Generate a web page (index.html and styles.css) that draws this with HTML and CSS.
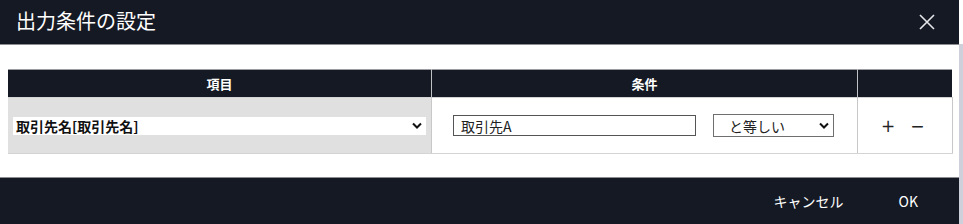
FILE: index.html
```html
<!DOCTYPE html>
<html lang="ja">
<head>
    <meta charset="UTF-8">
    <title>出力条件の設定</title>
    <link rel="stylesheet" href="styles.css">
</head>
<body>
    <div class="screen">
        <div class="modal">
            <div class="modal-head">
                <h1 class="modal-title">出力条件の設定</h1>
                <button class="close-btn" aria-label="閉じる">
                    <svg width="16" height="16" viewBox="0 0 16 16">
                        <path d="M1 1L15 15M15 1L1 15" stroke="#e4e6ea" stroke-width="1.6" fill="none"/>
                    </svg>
                </button>
            </div>

            <div class="modal-body">
                <table class="cond-table">
                    <thead>
                        <tr>
                            <th class="col-item">項目</th>
                            <th class="col-cond">条件</th>
                            <th class="col-ops"></th>
                        </tr>
                    </thead>
                    <tbody>
                        <tr>
                            <td class="cell-item">
                                <div class="item-select">
                                    <span>取引先名[取引先名]</span>
                                    <svg class="chev" width="10" height="7" viewBox="0 0 10 7"><path d="M1 1.5L5 5.5L9 1.5" stroke="#111" stroke-width="2" fill="none"/></svg>
                                </div>
                            </td>
                            <td class="cell-cond">
                                <div class="cond-wrap">
                                    <input class="cond-input" type="text" value="取引先A">
                                    <div class="op-select">
                                        <span>と等しい</span>
                                        <svg class="chev" width="10" height="7" viewBox="0 0 10 7"><path d="M1 1.5L5 5.5L9 1.5" stroke="#111" stroke-width="2" fill="none"/></svg>
                                    </div>
                                </div>
                            </td>
                            <td class="cell-ops">
                                <button class="op-btn">+</button>
                                <button class="op-btn">−</button>
                            </td>
                        </tr>
                    </tbody>
                </table>
            </div>

            <div class="modal-foot">
                <button class="foot-btn">キャンセル</button>
                <button class="foot-btn ok">OK</button>
            </div>
        </div>
        <div class="scroll-track"></div>
    </div>
</body>
</html>
```

FILE: styles.css
```css
body {
    margin: 0;
    background: #fff;
    font-family: "Noto Sans CJK JP", "Noto Sans", sans-serif;
}

.screen {
    display: flex;
    width: 963px;
    height: 224px;
    overflow: hidden;
}

.modal {
    width: 959px;
    display: flex;
    flex-direction: column;
}

.scroll-track {
    width: 4px;
    margin-top: 44px;
    background: #cdd0da;
}

/* header */
.modal-head {
    height: 44px;
    background: #151923;
    border-bottom: 1px solid #8b8d93;
    display: flex;
    align-items: center;
    justify-content: space-between;
    padding: 0 24px 0 16px;
}

.modal-title {
    margin: 0;
    color: #fff;
    font-size: 20px;
    font-weight: normal;
    line-height: 1;
    padding-bottom: 2px;
}

.close-btn {
    background: transparent;
    border: 0;
    padding: 0;
    display: flex;
    cursor: pointer;
}

/* body */
.modal-body {
    flex: 1;
    padding: 24px 9px 0 8px;
}

.cond-table {
    width: 942px;
    border-collapse: collapse;
    table-layout: fixed;
    font-size: 13px;
}

.cond-table th {
    height: 27px;
    padding: 0;
    background: #151923;
    color: #fff;
    font-weight: bold;
    border-top: 1px solid #9a9ca2;
    border-right: 1px solid #bfc1c5;
    line-height: 1;
}

.cond-table th:last-child {
    border-right: 0;
}

.col-item { width: 423px; }
.col-cond { width: 425px; }
.col-ops  { width: 94px; }

.cond-table td {
    height: 55px;
    padding: 0;
    border-top: 1px solid #d4d4d4;
    border-bottom: 1px solid #d4d4d4;
    border-right: 1px solid #c8c8c8;
    vertical-align: middle;
}

.cell-item {
    background: #e0e0e0;
    padding: 0 5px !important;
}

.item-select {
    height: 18px;
    background: #fff;
    display: flex;
    align-items: center;
    justify-content: space-between;
    padding: 0 4px 0 3px;
    font-weight: bold;
    color: #111;
    font-size: 14px;
}

.cond-wrap {
    display: flex;
    align-items: center;
    padding-left: 21px;
    gap: 17px;
}

.cond-input {
    width: 243px;
    height: 21px;
    box-sizing: border-box;
    border: 1px solid #555;
    padding: 0 7px;
    font-family: inherit;
    font-size: 14px;
    color: #222;
    outline: none;
}

.op-select {
    width: 121px;
    height: 23px;
    box-sizing: border-box;
    border: 1px solid #6f6f6f;
    display: flex;
    align-items: center;
    justify-content: space-between;
    padding: 0 4px 0 15px;
    color: #222;
    font-size: 14px;
}

.cell-ops {
    text-align: center;
    white-space: nowrap;
    padding-right: 4px !important;
}

.op-btn {
    background: transparent;
    border: 0;
    padding: 0 6px;
    font-family: "DejaVu Sans", sans-serif;
    font-size: 17px;
    color: #222;
    cursor: pointer;
}

/* footer */
.modal-foot {
    height: 46px;
    background: #151923;
    border-top: 1px solid #8b8d93;
    display: flex;
    align-items: center;
    justify-content: flex-end;
    padding-right: 41px;
    gap: 55px;
}

.foot-btn {
    background: transparent;
    border: 0;
    padding: 0;
    color: #fff;
    font-family: inherit;
    font-size: 14px;
    cursor: pointer;
}
```
